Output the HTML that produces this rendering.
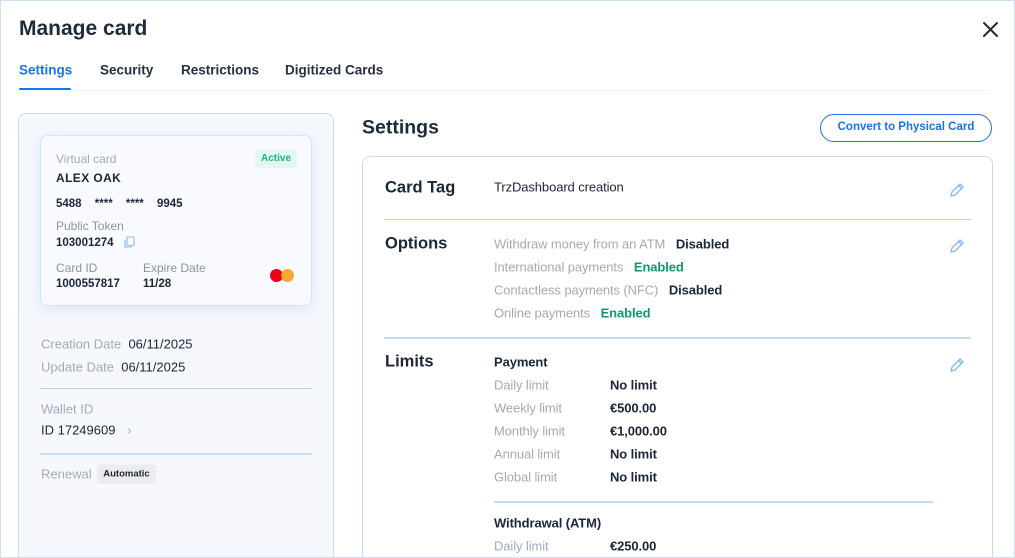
<!DOCTYPE html>
<html style="width:1015px;height:558px;overflow:hidden"><head><meta charset="utf-8"><style>
*{margin:0;padding:0;box-sizing:border-box}
body{width:1015px;height:558px;overflow:hidden;background:#fff;font-family:"Liberation Sans",sans-serif;color:#1b2638;position:relative}
.frame{position:absolute;left:0;top:0;width:1015px;height:558px;border:1px solid #cfe0f5;z-index:5;pointer-events:none}
.a{position:absolute;white-space:nowrap}
.c{transform:translateY(-50%)}
.g{color:#a3aab5}
.b{font-weight:bold}
.n{letter-spacing:-0.1px}
.en{color:#0f9a6e;font-weight:bold}
.hl{position:absolute;height:1px;background:#b9d4f2}
</style></head><body>
<div class="frame"></div>
<div class="a c b" style="left:19px;top:29px;font-size:21px;color:#1e2b3c">Manage card</div>
<svg class="a" style="left:982px;top:21px" width="17" height="17" viewBox="0 0 17 17"><path d="M2 2L15 15M15 2L2 15" stroke="#1e2b3c" stroke-width="2" stroke-linecap="round"/></svg>
<div class="a c b" style="left:19px;top:70px;font-size:13.5px;color:#1a73e8">Settings</div>
<div class="a c b" style="left:100px;top:70px;font-size:13.5px;color:#24303f">Security</div>
<div class="a c b" style="left:181px;top:70px;font-size:13.5px;color:#24303f">Restrictions</div>
<div class="a c b" style="left:285px;top:70px;font-size:13.5px;color:#24303f">Digitized Cards</div>
<div class="a" style="left:19px;top:88px;width:52px;height:2px;background:#1a73e8;border-radius:1px"></div>
<div class="a" style="left:71px;top:90px;width:920px;height:1px;background:#eef3fa"></div>

<div class="a" style="left:18px;top:113px;width:316px;height:460px;background:#f6f8fe;border:1px solid #cadcf3;border-radius:8px"></div>
<div class="a" style="left:40px;top:135px;width:272px;height:171px;background:#f8faff;border:1px solid #d6e4f6;border-radius:7px;box-shadow:0 4px 14px rgba(90,120,180,0.15)"></div>
<div class="a c g" style="left:56px;top:159px;font-size:12px">Virtual card</div>
<div class="a c" style="left:255px;top:159px;width:42px;height:18px;background:#e3f7f1;border-radius:4px;color:#16b58c;font-size:10px;font-weight:bold;text-align:center;line-height:18px">Active</div>
<div class="a c b" style="left:56px;top:178px;font-size:12px;letter-spacing:0.4px">ALEX OAK</div>
<div class="a c b" style="left:56px;top:204px;font-size:11.5px;word-spacing:10px">5488 **** **** 9945</div>
<div class="a c" style="left:56px;top:226px;font-size:12px;color:#8b93a0">Public Token</div>
<div class="a c b" style="left:56px;top:243px;font-size:11.5px">103001274</div>
<svg class="a" style="left:123px;top:236px" width="13" height="13" viewBox="0 0 13 13" fill="none" stroke="#9cc4f0" stroke-width="1.3"><rect x="4" y="1" width="7" height="8.5" rx="1"/><path d="M2 4v7h7"/></svg>
<div class="a c" style="left:56px;top:268px;font-size:12px;color:#8b93a0">Card ID</div>
<div class="a c b" style="left:56px;top:284px;font-size:11.5px">1000557817</div>
<div class="a c" style="left:143px;top:268px;font-size:12px;color:#8b93a0">Expire Date</div>
<div class="a c b" style="left:143px;top:284px;font-size:11.5px">11/28</div>
<div class="a" style="left:270px;top:269px;width:13px;height:13px;border-radius:50%;background:#eb001b"></div>
<div class="a" style="left:281px;top:269px;width:13px;height:13px;border-radius:50%;background:#f79e1b;opacity:.9"></div>

<div class="a c" style="left:41px;top:344px;font-size:13px"><span class="g">Creation Date</span>&nbsp;&nbsp;06/11/2025</div>
<div class="a c" style="left:41px;top:367px;font-size:13px"><span class="g">Update Date</span>&nbsp;&nbsp;06/11/2025</div>
<div class="hl" style="left:40px;top:388px;width:272px"></div>
<div class="a c g" style="left:41px;top:409px;font-size:13px">Wallet ID</div>
<div class="a c" style="left:41px;top:430px;font-size:13px">ID 17249609 <span style="color:#8ab8ee;margin-left:8px">›</span></div>
<div class="hl" style="left:40px;top:453px;width:272px;height:2px;background:#c4dcf6"></div>
<div class="a c g" style="left:41px;top:474px;font-size:13px">Renewal</div>
<div class="a c b" style="left:97px;top:474px;width:59px;height:19px;background:#ececef;border-radius:4px;font-size:9.5px;text-align:center;line-height:19px">Automatic</div>

<div class="a c b" style="left:362px;top:128px;font-size:19.5px;color:#1e2b3c">Settings</div>
<div class="a" style="left:820px;top:114px;width:172px;height:28px;border:1.6px solid #1a73e8;border-radius:14px;color:#1a73e8;font-size:11.5px;font-weight:bold;text-align:center;line-height:25px">Convert to Physical Card</div>
<div class="a" style="left:362px;top:156px;width:631px;height:420px;border:1px solid #cadcf3;border-radius:8px"></div>

<div class="a c b" style="left:385px;top:188px;font-size:16.5px">Card Tag</div>
<div class="a c n" style="left:494px;top:187px;font-size:13px">TrzDashboard creation</div>
<div class="hl" style="left:384px;top:219px;width:587px"></div>
<div class="a c b" style="left:385px;top:244px;font-size:16.5px">Options</div>
<div class="a c n" style="left:494px;top:244px;font-size:13px"><span class="g">Withdraw money from an ATM</span>&nbsp;&nbsp; <b>Disabled</b></div>
<div class="a c n" style="left:494px;top:267px;font-size:13px"><span class="g">International payments</span>&nbsp;&nbsp; <span class="en">Enabled</span></div>
<div class="a c n" style="left:494px;top:290px;font-size:13px"><span class="g">Contactless payments (NFC)</span>&nbsp;&nbsp; <b>Disabled</b></div>
<div class="a c n" style="left:494px;top:313px;font-size:13px"><span class="g">Online payments</span>&nbsp;&nbsp; <span class="en">Enabled</span></div>
<div class="hl" style="left:384px;top:337px;width:587px;height:2px;background:#c4dcf6"></div>
<div class="a c b" style="left:385px;top:362px;font-size:16.5px">Limits</div>
<div class="a c b n" style="left:494px;top:362px;font-size:13px">Payment</div>
<div class="a c g n" style="left:494px;top:385px;font-size:13px">Daily limit</div><div class="a c b n" style="left:610px;top:385px;font-size:13px">No limit</div>
<div class="a c g n" style="left:494px;top:408px;font-size:13px">Weekly limit</div><div class="a c b n" style="left:610px;top:408px;font-size:13px">€500.00</div>
<div class="a c g n" style="left:494px;top:431px;font-size:13px">Monthly limit</div><div class="a c b n" style="left:610px;top:431px;font-size:13px">€1,000.00</div>
<div class="a c g n" style="left:494px;top:454px;font-size:13px">Annual limit</div><div class="a c b n" style="left:610px;top:454px;font-size:13px">No limit</div>
<div class="a c g n" style="left:494px;top:477px;font-size:13px">Global limit</div><div class="a c b n" style="left:610px;top:477px;font-size:13px">No limit</div>
<div class="hl" style="left:494px;top:501px;width:439px;height:2px;background:#c4dcf6"></div>
<div class="a c b n" style="left:494px;top:523px;font-size:13px">Withdrawal (ATM)</div>
<div class="a c g n" style="left:494px;top:546px;font-size:13px">Daily limit</div><div class="a c b n" style="left:610px;top:546px;font-size:13px">€250.00</div>

<svg class="a" style="left:949px;top:182px" width="16" height="16" viewBox="0 0 16 16" fill="none" stroke="#8ab8ee" stroke-width="1.4" stroke-linejoin="round"><path d="M2 14l1-4 8-8 3 3-8 8z M9.5 3.5l3 3"/></svg>
<svg class="a" style="left:949px;top:238px" width="16" height="16" viewBox="0 0 16 16" fill="none" stroke="#8ab8ee" stroke-width="1.4" stroke-linejoin="round"><path d="M2 14l1-4 8-8 3 3-8 8z M9.5 3.5l3 3"/></svg>
<svg class="a" style="left:949px;top:357px" width="16" height="16" viewBox="0 0 16 16" fill="none" stroke="#8ab8ee" stroke-width="1.4" stroke-linejoin="round"><path d="M2 14l1-4 8-8 3 3-8 8z M9.5 3.5l3 3"/></svg>
</body></html>
